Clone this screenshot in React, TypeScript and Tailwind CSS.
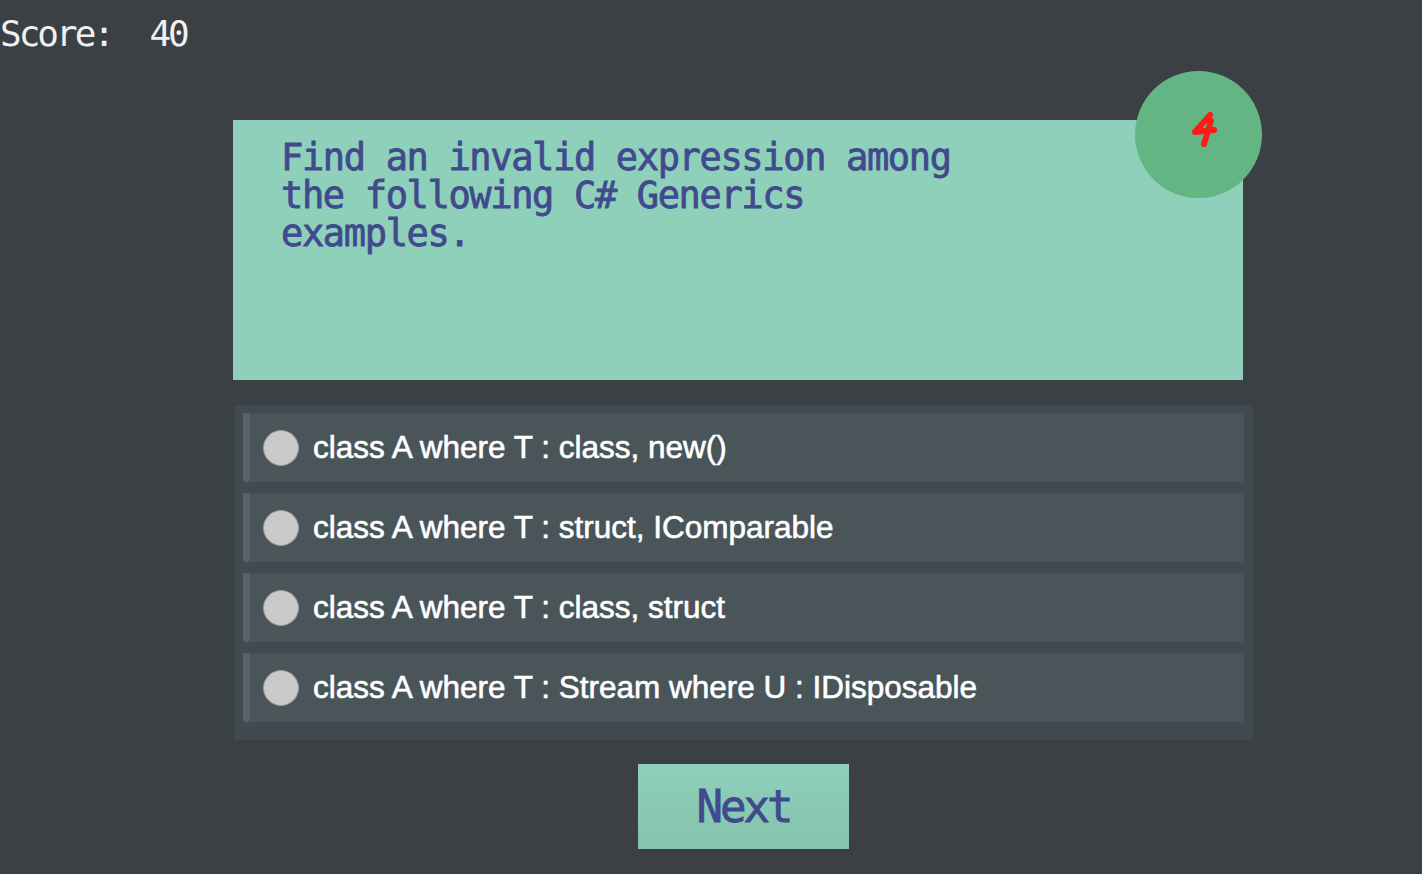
import React from "react";

const options = [
  "class A where T : class, new()",
  "class A where T : struct, IComparable",
  "class A where T : class, struct",
  "class A where T : Stream where U : IDisposable",
];

export default function App() {
  return (
    <div className="w-[1422px] h-[874px] bg-[#3b4045] relative overflow-hidden">
      <div className="absolute left-0 top-[12px] text-[36px] leading-[44px] tracking-[-3px] text-[#f0f0f0] font-['DejaVu_Sans_Mono',monospace] whitespace-pre">
        Score:  40
      </div>

      <div className="pt-[120px] flex flex-col items-start">
        <div className="relative ml-[233px] w-[1010px] h-[260px] bg-[#8fd0bb] pl-[48px] pt-[19px]">
          <div className="text-[37px] leading-[38px] tracking-[-1.35px] text-[#404a8c] font-['DejaVu_Sans_Mono',monospace] [-webkit-text-stroke:0.8px_#404a8c] whitespace-pre">
            <div>Find an invalid expression among</div>
            <div>the following C# Generics</div>
            <div>examples.</div>
          </div>
          <div className="absolute right-[-19px] top-[-49px] w-[127px] h-[127px] rounded-full bg-[#63b584] flex items-center justify-center">
            <svg width="40" height="44" viewBox="0 0 40 44" className="ml-[14px] mt-[-10px]">
              <path
                d="M24 7 L9 24 L28 22 M25 13 L18 36"
                stroke="#ff1a1a"
                strokeWidth="6"
                strokeLinecap="round"
                strokeLinejoin="round"
                fill="none"
              />
            </svg>
          </div>
        </div>

        <div className="mt-[25px] ml-[234px] w-[1019px] bg-[#3f4b50] pt-[8px] pb-[18px] pl-[9px] pr-[9px] flex flex-col gap-[11px] rounded-[2px]">
          {options.map((o) => (
            <div key={o} className="h-[69px] flex items-stretch">
              <div className="w-[7px] bg-[#56636a] rounded-[2px]" />
              <div className="flex-1 bg-[#4a555a] rounded-r-[3px] flex items-center pl-[13px]">
                <div className="w-[36px] h-[36px] rounded-full bg-[#c9c9c9] border border-[#9a9a9a]" />
                <span className="ml-[14px] text-[31.5px] text-white font-['Liberation_Sans',Arial,sans-serif] leading-none [-webkit-text-stroke:0.6px_white]">
                  {o}
                </span>
              </div>
            </div>
          ))}
        </div>

        <button className="mt-[24px] ml-[638px] w-[211px] h-[85px] bg-gradient-to-b from-[#8fd0bb] to-[#84c3ad] flex items-center justify-center">
          <span className="text-[44px] tracking-[-3px] text-[#404a8c] font-['DejaVu_Sans_Mono',monospace] [-webkit-text-stroke:0.8px_#404a8c]">
            Next
          </span>
        </button>
      </div>
    </div>
  );
}
